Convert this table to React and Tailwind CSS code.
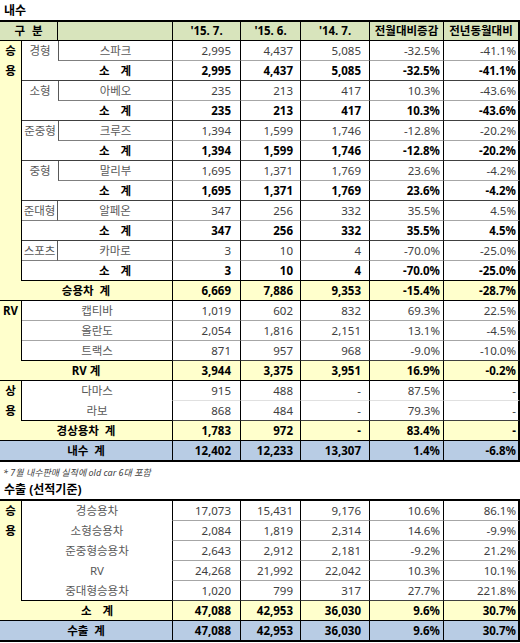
import React from 'react';

const W = ['w-[68px]', 'w-[60px]', 'w-[69px]', 'w-[74px]', 'w-[77px]'];
const PR = ['pr-[9px]', 'pr-[7px]', 'pr-[8px]', 'pr-[3px]', 'pr-[2px]'];

const GRAY = 'border-b border-b-[#a6a6a6]';
const LIGHT = 'border-b border-b-[#e0e0e0]';
const SUB = 'border-b border-b-[#404040]';
const BLACK = 'border-b border-b-black';
const THICK = 'border-b-2 border-b-black';

function NumCells({ vals, bold, bb }) {
  return vals.map((v, i) => (
    <div
      key={i}
      className={`${W[i]} ${PR[i]} shrink-0 flex items-center justify-end border-l border-l-black ${
        i === 4 ? 'border-r-2 border-r-black' : ''
      } ${bb} ${bold ? 'font-bold text-black' : 'text-[#404040]'}`}
    >
      {v}
    </div>
  ));
}

function Sogye() {
  return (
    <span className="flex gap-[11px]">
      <span>소</span>
      <span>계</span>
    </span>
  );
}

const groups = [
  { seg: '경형', p: '스파크', v: ['2,995', '4,437', '5,085', '-32.5%', '-41.1%'] },
  { seg: '소형', p: '아베오', v: ['235', '213', '417', '10.3%', '-43.6%'] },
  { seg: '준중형', p: '크루즈', v: ['1,394', '1,599', '1,746', '-12.8%', '-20.2%'] },
  { seg: '중형', p: '말리부', v: ['1,695', '1,371', '1,769', '23.6%', '-4.2%'] },
  { seg: '준대형', p: '알페온', v: ['347', '256', '332', '35.5%', '4.5%'], boxed: true },
  { seg: '스포츠', p: '카마로', v: ['3', '10', '4', '-70.0%', '-25.0%'], boxed: true },
];

function Group({ g, last }) {
  const gb = last ? 'border-b-black' : 'border-b-[#404040]';
  return (
    <div className="flex">
      {g.boxed ? (
        <div className="w-[36px] shrink-0 flex flex-col text-[#595959]">
          <div className="h-[20px] flex items-center justify-center whitespace-nowrap border-r border-r-[#595959] border-b border-b-[#7f7f7f]">
            {g.seg}
          </div>
          <div className={`h-[20px] border-b ${gb}`}></div>
        </div>
      ) : (
        <div className={`w-[36px] shrink-0 border-b ${gb} text-[#595959]`}>
          <div className="h-[20px] flex items-center justify-center whitespace-nowrap">{g.seg}</div>
        </div>
      )}
      <div className="flex flex-col">
        <div className="flex h-[20px]">
          <div
            className={`w-[114px] shrink-0 flex items-center justify-center text-[#595959] border-b border-b-[#7f7f7f] ${
              g.boxed ? '' : 'border-l border-l-[#595959]'
            }`}
          >
            {g.p}
          </div>
          <NumCells vals={g.v} bb={GRAY} />
        </div>
        <div className="flex h-[20px]">
          <div className={`w-[114px] shrink-0 flex items-center justify-center font-bold text-black border-b ${gb}`}>
            <Sogye />
          </div>
          <NumCells vals={g.v} bold bb={last ? BLACK : SUB} />
        </div>
      </div>
    </div>
  );
}

function LabelCol({ chars, bottom }) {
  return (
    <div className={`w-[22px] shrink-0 bg-[#ffffcc] border-r border-r-black font-bold text-black ${bottom || ''}`}>
      {chars.map((c, i) => (
        <div key={i} className="h-[20px] flex items-center justify-center">
          {c}
        </div>
      ))}
    </div>
  );
}

function ProdRow({ name, vals, pb, nb }) {
  return (
    <div className="flex h-[20px]">
      <div className={`w-[150px] shrink-0 flex items-center justify-center text-[#595959] ${pb}`}>{name}</div>
      <NumCells vals={vals} bb={nb} />
    </div>
  );
}

function TotalRow({ label, vals, bg, bb, h = 'h-[20px]' }) {
  return (
    <div className={`flex ${h} ${bg}`}>
      <div className={`w-[172px] shrink-0 flex items-center justify-center font-bold text-black whitespace-pre ${bb}`}>
        {label}
      </div>
      <NumCells vals={vals} bold bb={bb} />
    </div>
  );
}

export default function App() {
  return (
    <div className="w-[520px] bg-white text-[11.5px] leading-none font-['Noto_Sans','Noto_Sans_CJK_KR',sans-serif]">
      <div className="h-[20px] flex items-center pl-[4px] pt-[1px] font-bold text-[12px] text-black">내수</div>

      {/* Table 1 */}
      <div className="border-t-2 border-t-black">
        <div className="flex h-[19px] bg-[#d8e4bc] font-bold text-black">
          <div className="w-[58px] shrink-0 flex items-center justify-center gap-[7px] border-r border-r-black border-b border-b-black">
            <span>구</span>
            <span>분</span>
          </div>
          <div className="w-[114px] shrink-0 border-b border-b-black"></div>
          {["'15. 7.", "'15. 6.", "'14. 7.", '전월대비증감', '전년동월대비'].map((t, i) => (
            <div
              key={i}
              className={`${W[i]} shrink-0 flex items-center justify-center whitespace-nowrap border-l border-l-black border-b border-b-black ${
                i === 4 ? 'border-r-2 border-r-black' : ''
              }`}
            >
              {t}
            </div>
          ))}
        </div>

        {/* 승용 block */}
        <div className="flex">
          <LabelCol chars={['승', '용']} />
          <div className="flex flex-col">
            {groups.map((g, i) => (
              <Group key={i} g={g} last={i === groups.length - 1} />
            ))}
          </div>
        </div>
        <TotalRow label="승용차  계" vals={['6,669', '7,886', '9,353', '-15.4%', '-28.7%']} bg="bg-[#ffffcc]" bb={BLACK} />

        {/* RV block */}
        <div className="flex">
          <LabelCol chars={['RV']} />
          <div className="flex flex-col">
            <ProdRow name="캡티바" vals={['1,019', '602', '832', '69.3%', '22.5%']} pb="border-b border-b-[#a6a6a6]" nb={GRAY} />
            <ProdRow name="올란도" vals={['2,054', '1,816', '2,151', '13.1%', '-4.5%']} pb="border-b border-b-[#a6a6a6]" nb={GRAY} />
            <ProdRow name="트랙스" vals={['871', '957', '968', '-9.0%', '-10.0%']} pb="border-b border-b-black" nb={SUB} />
          </div>
        </div>
        <TotalRow label="RV 계" vals={['3,944', '3,375', '3,951', '16.9%', '-0.2%']} bg="bg-[#ffffcc]" bb={BLACK} />

        {/* 상용 block */}
        <div className="flex">
          <LabelCol chars={['상', '용']} />
          <div className="flex flex-col">
            <ProdRow name="다마스" vals={['915', '488', '-', '87.5%', '-']} pb="border-b border-b-transparent" nb={LIGHT} />
            <ProdRow name="라보" vals={['868', '484', '-', '79.3%', '-']} pb="border-b border-b-black" nb={SUB} />
          </div>
        </div>
        <TotalRow label="경상용차  계" vals={['1,783', '972', '-', '83.4%', '-']} bg="bg-[#ffffcc]" bb={BLACK} />
        <TotalRow label="내수  계" vals={['12,402', '12,233', '13,307', '1.4%', '-6.8%']} bg="bg-[#b8cce4]" bb={THICK} h="h-[21px]" />
      </div>

      <div className="h-[19px] flex items-center pl-[3px] pt-[2px] italic text-[9px] text-[#404040]">
        * 7월 내수판매 실적에 old car 6대 포함
      </div>
      <div className="h-[18px] flex items-center pl-[4px] font-bold text-[12px] text-black">수출 (선적기준)</div>

      {/* Table 2 */}
      <div className="border-t-2 border-t-black">
        <div className="flex">
          <LabelCol chars={['승', '용']} />
          <div className="flex flex-col">
            <ProdRow name="경승용차" vals={['17,073', '15,431', '9,176', '10.6%', '86.1%']} pb="" nb={GRAY} />
            <ProdRow name="소형승용차" vals={['2,084', '1,819', '2,314', '14.6%', '-9.9%']} pb="" nb={GRAY} />
            <ProdRow name="준중형승용차" vals={['2,643', '2,912', '2,181', '-9.2%', '21.2%']} pb="" nb={GRAY} />
            <ProdRow name="RV" vals={['24,268', '21,992', '22,042', '10.3%', '10.1%']} pb="" nb={GRAY} />
            <ProdRow name="중대형승용차" vals={['1,020', '799', '317', '27.7%', '221.8%']} pb="border-b border-b-black" nb={SUB} />
          </div>
        </div>
        <div className="flex h-[20px] bg-[#ffffcc]">
          <div className={`w-[22px] shrink-0 ${BLACK}`}></div>
          <div className={`w-[150px] shrink-0 flex items-center justify-center font-bold text-black ${BLACK}`}>
            <Sogye />
          </div>
          <NumCells vals={['47,088', '42,953', '36,030', '9.6%', '30.7%']} bold bb={BLACK} />
        </div>
        <TotalRow label="수출  계" vals={['47,088', '42,953', '36,030', '9.6%', '30.7%']} bg="bg-[#b8cce4]" bb={THICK} h="h-[21px]" />
      </div>
    </div>
  );
}
